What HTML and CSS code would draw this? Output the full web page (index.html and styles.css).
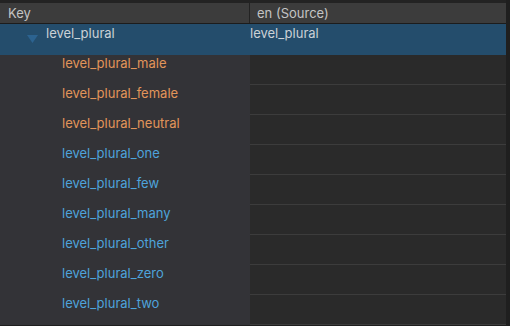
FILE: index.html
```html
<!DOCTYPE html>
<html>
<head>
<meta charset="utf-8">
<link rel="stylesheet" href="styles.css">
</head>
<body>
<div class="table">
  <div class="header">
    <div class="hcell key">Key</div>
    <div class="hcell src">en (Source)</div>
  </div>
  <div class="row selected">
    <div class="cell key parent">
      <svg class="tri" width="11" height="8" viewBox="0 0 11 8"><path d="M0 0 H11 L5.5 8 Z" fill="#2c6390"/></svg>
      <span>level_plural</span>
    </div>
    <div class="cell src">level_plural</div>
  </div>
  <div class="row"><div class="cell key child orange">level_plural_male</div><div class="cell src"></div></div>
  <div class="row"><div class="cell key child orange">level_plural_female</div><div class="cell src"></div></div>
  <div class="row"><div class="cell key child orange">level_plural_neutral</div><div class="cell src"></div></div>
  <div class="row"><div class="cell key child blue">level_plural_one</div><div class="cell src"></div></div>
  <div class="row"><div class="cell key child blue">level_plural_few</div><div class="cell src"></div></div>
  <div class="row"><div class="cell key child blue">level_plural_many</div><div class="cell src"></div></div>
  <div class="row"><div class="cell key child blue">level_plural_other</div><div class="cell src"></div></div>
  <div class="row"><div class="cell key child blue">level_plural_zero</div><div class="cell src"></div></div>
  <div class="row"><div class="cell key child blue">level_plural_two</div><div class="cell src"></div></div>
</div>
</body>
</html>
```
FILE: styles.css
```css
html, body {
  margin: 0;
  padding: 0;
  background: #1f1f1f;
  width: 510px;
  height: 326px;
  overflow: hidden;
  font-family: Inter, "Noto Sans", sans-serif;
  font-size: 13px;
}
.table {
  width: 506px;
  padding-top: 3px;
  background: #232323;
}
.header {
  display: flex;
  height: 20px;
  border-bottom: 1px solid #1c1c1c;
  color: #c4c4c4;
}
.hcell {
  background: #3c3c3c;
  display: flex;
  align-items: center;
  box-sizing: border-box;
}
.hcell.key {
  width: 250px;
  padding-left: 8px;
  border-right: 1px solid #232323;
}
.hcell.src {
  flex: 1;
  padding-left: 7px;
}
.row {
  display: flex;
  height: 30px;
}
.row.selected {
  height: 31px;
}
.cell {
  box-sizing: border-box;
  padding-top: 0;
  line-height: 16px;
}
.cell.key {
  width: 250px;
  background: #333337;
}
.cell.src {
  flex: 1;
  background: #2a2a2a;
  border-bottom: 1px solid #3c3c3c;
}
.row.selected .cell {
  background: #244d6c;
  border-bottom: none;
  color: #cbd1d6;
  padding-top: 1px;
}
.row.selected .cell.src {
  padding-left: 0;
}
.parent {
  display: flex;
  align-items: flex-start;
}
.tri {
  margin: 10px 8px 0 27px;
}
.child {
  padding-left: 62px;
}
.orange { color: #e2955a; }
.blue { color: #4ea3db; }
```
